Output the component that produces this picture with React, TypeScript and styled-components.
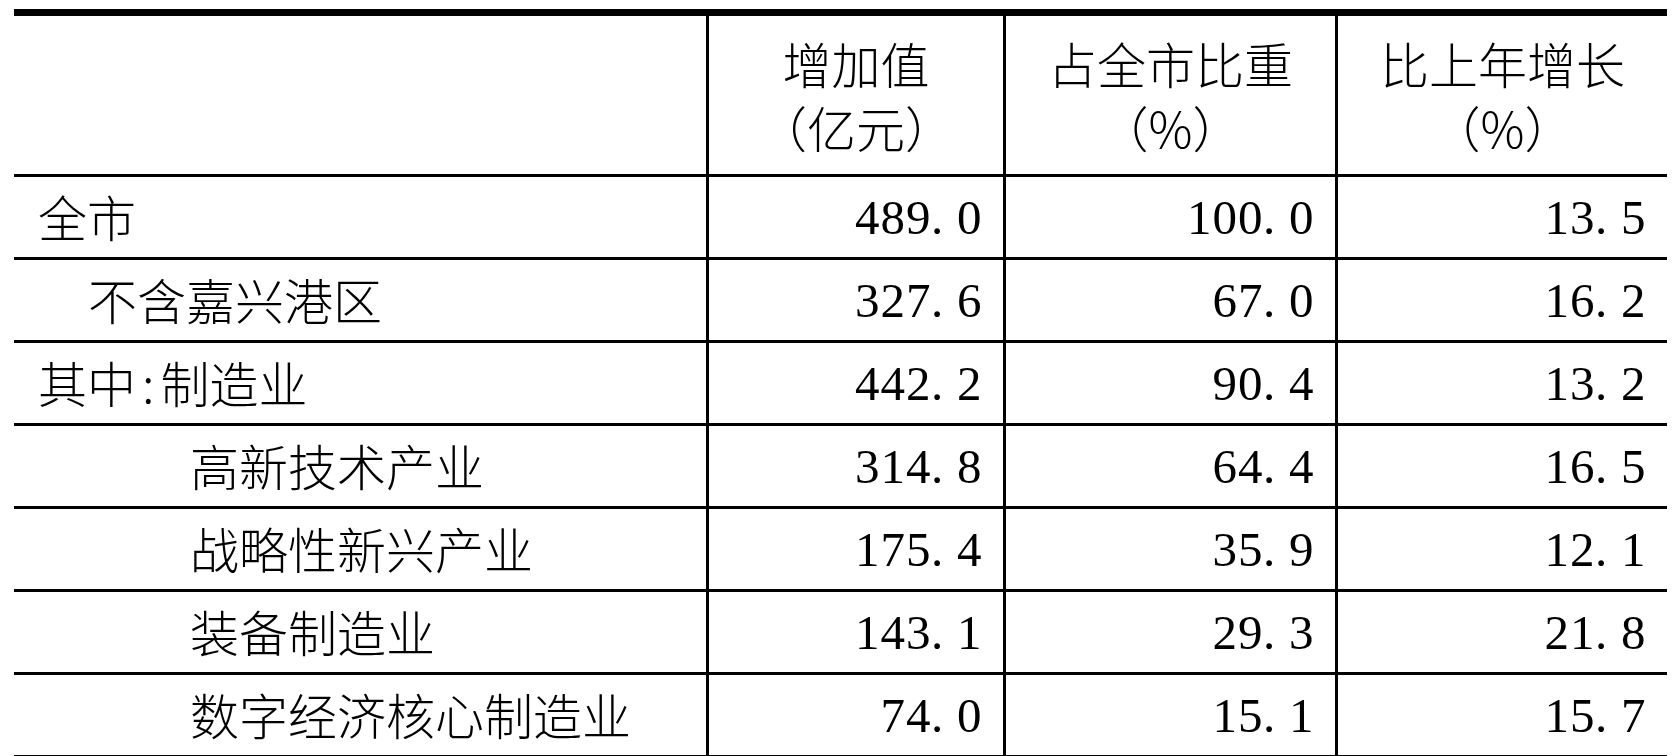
import React from 'react';
import styled, { createGlobalStyle } from 'styled-components';

const GlobalStyle = createGlobalStyle`
  html, body {
    margin: 0;
    padding: 0;
    background: #ffffff;
  }
  body {
    font-family: "Noto Sans CJK SC", "Noto Sans", sans-serif;
    color: #000000;
  }
`;

const Page = styled.div`
  padding: 9px 7px 0 14px;
`;

const Table = styled.div`
  width: 1653px;
  border-top: 7px solid #000;
`;

const Row = styled.div<{ $header?: boolean }>`
  display: grid;
  grid-template-columns: 692px 297px 332px 332px;
  height: ${(p) => (p.$header ? 161 : 83)}px;
  box-sizing: border-box;
  border-bottom: 3px solid #000;
`;

const Cell = styled.div<{ $divider?: boolean }>`
  box-sizing: border-box;
  border-left: ${(p) => (p.$divider ? '3px solid #000' : 'none')};
  font-size: 49px;
  font-weight: 300;
  color: #000;
  white-space: nowrap;
`;

const HeadCell = styled(Cell)`
  display: flex;
  flex-direction: column;
  align-items: center;
  justify-content: center;
  line-height: 64px;
`;

const HeadLine = styled.div`
  display: block;
`;

const LabelCell = styled(Cell)<{ $indent: number }>`
  display: flex;
  align-items: center;
  padding-left: ${(p) => 24 + p.$indent}px;
  padding-bottom: 4px;
  line-height: 1;
  font-feature-settings: "hwid";
`;

const NumCell = styled(Cell)`
  display: flex;
  align-items: center;
  justify-content: flex-end;
  padding-right: 21px;
  font-family: "Liberation Serif", "Times New Roman", serif;
  font-weight: 400;
  line-height: 1;
`;

const Glyph = styled.span<{ $dot?: boolean }>`
  display: inline-block;
  width: 25.5px;
  text-align: ${(p) => (p.$dot ? 'left' : 'center')};
`;

type DataRow = {
  label: string;
  indent: number;
  value: string;
  share: string;
  growth: string;
};

const rows: DataRow[] = [
  { label: '全市', indent: 0, value: '489.0', share: '100.0', growth: '13.5' },
  { label: '不含嘉兴港区', indent: 50, value: '327.6', share: '67.0', growth: '16.2' },
  { label: '其中:制造业', indent: 0, value: '442.2', share: '90.4', growth: '13.2' },
  { label: '高新技术产业', indent: 152, value: '314.8', share: '64.4', growth: '16.5' },
  { label: '战略性新兴产业', indent: 152, value: '175.4', share: '35.9', growth: '12.1' },
  { label: '装备制造业', indent: 152, value: '143.1', share: '29.3', growth: '21.8' },
  { label: '数字经济核心制造业', indent: 152, value: '74.0', share: '15.1', growth: '15.7' },
];

const Num: React.FC<{ text: string }> = ({ text }) => (
  <>
    {text.split('').map((ch, i) => (
      <Glyph key={i} $dot={ch === '.'}>
        {ch}
      </Glyph>
    ))}
  </>
);

export default function App() {
  return (
    <>
      <GlobalStyle />
      <Page>
        <Table>
          <Row $header>
            <HeadCell />
            <HeadCell $divider>
              <HeadLine>增加值</HeadLine>
              <HeadLine>（亿元）</HeadLine>
            </HeadCell>
            <HeadCell $divider>
              <HeadLine>占全市比重</HeadLine>
              <HeadLine>（%）</HeadLine>
            </HeadCell>
            <HeadCell $divider>
              <HeadLine>比上年增长</HeadLine>
              <HeadLine>（%）</HeadLine>
            </HeadCell>
          </Row>
          {rows.map((r) => (
            <Row key={r.label}>
              <LabelCell $indent={r.indent}>{r.label}</LabelCell>
              <NumCell $divider>
                <Num text={r.value} />
              </NumCell>
              <NumCell $divider>
                <Num text={r.share} />
              </NumCell>
              <NumCell $divider>
                <Num text={r.growth} />
              </NumCell>
            </Row>
          ))}
        </Table>
      </Page>
    </>
  );
}
